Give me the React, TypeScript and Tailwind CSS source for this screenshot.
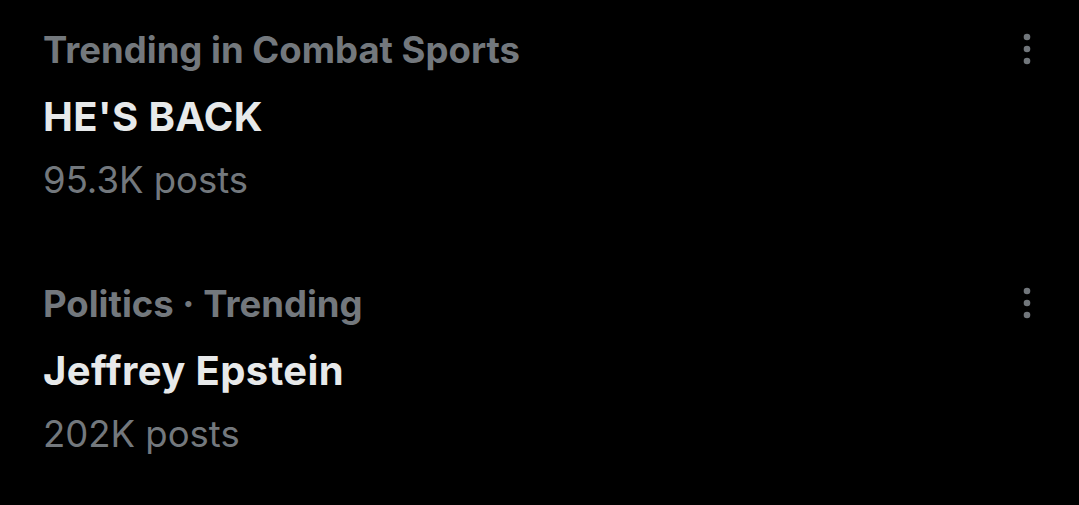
const trends = [
  { context: 'Trending in Combat Sports', name: "HE'S BACK", posts: '95.3K posts' },
  { context: 'Politics · Trending', name: 'Jeffrey Epstein', posts: '202K posts' },
]

function MoreIcon() {
  return (
    <svg width="14" height="38" viewBox="0 0 14 38" className="text-[#71767b]">
      <circle cx="7" cy="7" r="3.3" fill="currentColor" />
      <circle cx="7" cy="19" r="3.3" fill="currentColor" />
      <circle cx="7" cy="31" r="3.3" fill="currentColor" />
    </svg>
  )
}

export default function App() {
  return (
    <div className="min-h-[505px] w-full bg-black pt-[18px] font-['Inter',sans-serif]">
      <div className="flex flex-col gap-[64px]">
        {trends.map((trend) => (
          <div key={trend.name} className="flex justify-between pl-[43px] pr-[45px]">
            <div className="flex flex-col">
              <span className="text-[36.5px] font-bold leading-[64px] text-[#73787d]">{trend.context}</span>
              <span className="text-[40px] font-bold leading-[70px] tracking-[0.4px] text-[#e7e9ea]">{trend.name}</span>
              <span className="text-[36.5px] leading-[56px] text-[#73787d]">{trend.posts}</span>
            </div>
            <div className="pt-[12px]">
              <MoreIcon />
            </div>
          </div>
        ))}
      </div>
    </div>
  )
}
